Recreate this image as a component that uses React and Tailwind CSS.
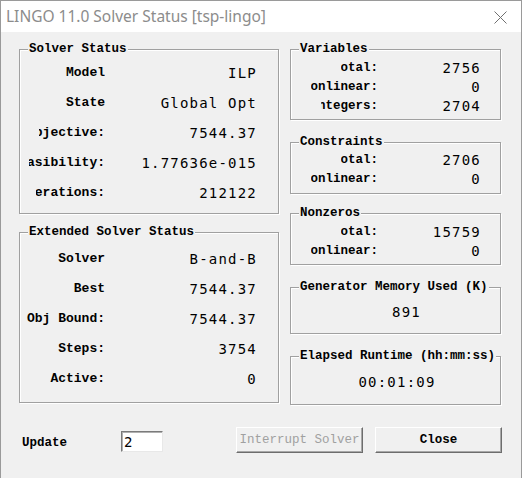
import React from 'react';

// LINGO solver status dialog

const LABEL = "font-['Liberation_Mono',monospace] font-bold text-[12.5px] leading-[16px] text-black";
const ROWLABEL = "font-['Liberation_Mono',monospace] font-bold text-[13px] leading-[16px] text-black";
const VALUE = "font-['DejaVu_Sans_Mono',monospace] text-[14px] tracking-[1.2px] leading-[18px] text-black";

function Group({ title, className, children }) {
  return (
    <div className={`relative border border-[#a0a0a0] shadow-[inset_1px_1px_0_#fff,1px_1px_0_#fff] ${className}`}>
      <span className={`absolute left-[8px] -top-[9px] bg-[#f0f0f0] px-[1px] whitespace-nowrap ${LABEL}`}>
        {title}
      </span>
      {children}
    </div>
  );
}

// right-aligned label that gets clipped on the left, like the original statics
function Clip({ width, font = LABEL, children }) {
  return (
    <div className={`flex justify-end overflow-hidden whitespace-nowrap ${width}`}>
      <span className={`shrink-0 ${font}`}>{children}</span>
    </div>
  );
}

function LeftRow({ label, value, clip = 'w-[85px]' }) {
  return (
    <div className="flex items-center h-[30px]">
      <div className="w-[85px] flex justify-end">
        <Clip width={clip} font={ROWLABEL}>{label}</Clip>
      </div>
      <div className={`flex-1 text-right pr-[21px] whitespace-nowrap ${VALUE}`}>{value}</div>
    </div>
  );
}

function RightRow({ label, clip, value }) {
  return (
    <div className="flex items-center h-[19px]">
      <div className="w-[87px] flex justify-end">
        <Clip width={clip}>{label}</Clip>
      </div>
      <div className={`flex-1 text-right pr-[19px] ${VALUE}`}>{value}</div>
    </div>
  );
}

export default function App() {
  return (
    <div className="w-[522px] h-[478px] bg-[#f0f0f0] border-l border-t border-r border-[#9a9a9a] flex flex-col overflow-hidden">
      {/* title bar */}
      <div className="h-[31px] bg-white flex items-center justify-between pl-[5px] pr-[14px] shrink-0">
        <span className="font-['Noto_Sans',sans-serif] text-[15.5px] text-[#8c8c8c] whitespace-nowrap">
          LINGO 11.0 Solver Status [tsp-lingo]
        </span>
        <svg width="13" height="13" viewBox="0 0 13 13" className="mt-[1px]">
          <path d="M0.5 0.5 L12.5 12.5 M12.5 0.5 L0.5 12.5" stroke="#707070" strokeWidth="1" fill="none" />
        </svg>
      </div>

      <div className="pl-[18px] pt-[17px]">
        <div className="flex gap-[11px]">
          {/* left column */}
          <div className="w-[260px] flex flex-col">
            <Group title="Solver Status" className="h-[165px] pt-[8px]">
              <LeftRow label="Model" value="ILP" />
              <LeftRow label="State" value="Global Opt" />
              <LeftRow label="Objective:" clip="w-[66px]" value="7544.37" />
              <LeftRow label="Infeasibility:" clip="w-[76px]" value="1.77636e-015" />
              <LeftRow label="Iterations:" clip="w-[69px]" value="212122" />
            </Group>
            <Group title="Extended Solver Status" className="mt-[18px] h-[171px] pt-[11px]">
              <LeftRow label="Solver" value="B-and-B" />
              <LeftRow label="Best" value="7544.37" />
              <LeftRow label="Obj Bound:" value="7544.37" />
              <LeftRow label="Steps:" value="3754" />
              <LeftRow label="Active:" value="0" />
            </Group>
          </div>

          {/* right column */}
          <div className="w-[211px] flex flex-col">
            <Group title="Variables" className="h-[71px] pt-[8px]">
              <RightRow label="Total:" clip="w-[37px]" value="2756" />
              <RightRow label="Nonlinear:" clip="w-[67px]" value="0" />
              <RightRow label="Integers:" clip="w-[57px]" value="2704" />
            </Group>
            <Group title="Constraints" className="mt-[22px] h-[52px] pt-[7px]">
              <RightRow label="Total:" clip="w-[37px]" value="2706" />
              <RightRow label="Nonlinear:" clip="w-[67px]" value="0" />
            </Group>
            <Group title="Nonzeros" className="mt-[19px] h-[52px] pt-[8px]">
              <RightRow label="Total:" clip="w-[37px]" value="15759" />
              <RightRow label="Nonlinear:" clip="w-[67px]" value="0" />
            </Group>
            <Group title="Generator Memory Used (K)" className="mt-[22px] h-[47px] pt-[15px]">
              <div className={`text-center pl-[22px] ${VALUE}`}>891</div>
            </Group>
            <Group title="Elapsed Runtime (hh:mm:ss)" className="mt-[22px] h-[49px] pt-[16px]">
              <div className={`text-center pl-[3px] ${VALUE}`}>00:01:09</div>
            </Group>
          </div>
        </div>

        {/* bottom row */}
        <div className="flex items-start h-[26px] mt-[22px]">
          <div className={`w-[102px] pl-[3px] mt-[8px] ${LABEL}`}>Update</div>
          <div className="mt-[4px] w-[42px] h-[21px] bg-white border border-t-[#7a7a7a] border-l-[#7a7a7a] border-b-[#e8e8e8] border-r-[#e8e8e8] shadow-[inset_1px_1px_0_#b0b0b0] pl-[2px] flex items-center">
            <span className="font-['DejaVu_Sans_Mono',monospace] text-[14px] leading-[16px] text-black">2</span>
          </div>
          <button
            disabled
            className="ml-[73px] w-[127px] h-[26px] bg-[#f0f0f0] border border-t-white border-l-white border-b-[#6d6d6d] border-r-[#6d6d6d] shadow-[inset_-1px_-1px_0_#a8a8a8] font-['Liberation_Mono',monospace] text-[12.5px] text-[#a0a0a0]"
          >
            Interrupt Solver
          </button>
          <button className="ml-[12px] w-[127px] h-[26px] bg-[#f0f0f0] border border-t-white border-l-white border-b-[#6d6d6d] border-r-[#6d6d6d] shadow-[inset_-1px_-1px_0_#a8a8a8] font-['Liberation_Mono',monospace] font-bold text-[12.5px] text-black">
            Close
          </button>
        </div>
      </div>
    </div>
  );
}
